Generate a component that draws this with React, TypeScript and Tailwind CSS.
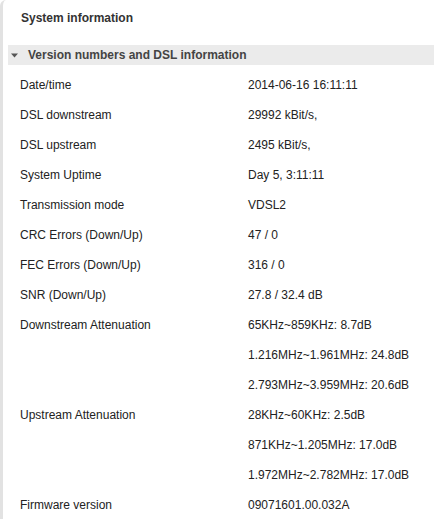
import React from 'react';

interface InfoRow {
  label: string;
  value: string;
}

const ROWS: InfoRow[] = [
  { label: 'Date/time', value: '2014-06-16 16:11:11' },
  { label: 'DSL downstream', value: '29992 kBit/s,' },
  { label: 'DSL upstream', value: '2495 kBit/s,' },
  { label: 'System Uptime', value: 'Day 5, 3:11:11' },
  { label: 'Transmission mode', value: 'VDSL2' },
  { label: 'CRC Errors (Down/Up)', value: '47 / 0' },
  { label: 'FEC Errors (Down/Up)', value: '316 / 0' },
  { label: 'SNR (Down/Up)', value: '27.8 / 32.4 dB' },
  { label: 'Downstream Attenuation', value: '65KHz~859KHz: 8.7dB' },
  { label: '', value: '1.216MHz~1.961MHz: 24.8dB' },
  { label: '', value: '2.793MHz~3.959MHz: 20.6dB' },
  { label: 'Upstream Attenuation', value: '28KHz~60KHz: 2.5dB' },
  { label: '', value: '871KHz~1.205MHz: 17.0dB' },
  { label: '', value: '1.972MHz~2.782MHz: 17.0dB' },
  { label: 'Firmware version', value: '09071601.00.032A' },
];

export default function App() {
  return (
    <div className="w-[434px] h-[519px] overflow-hidden bg-white font-['Liberation_Sans',Arial,sans-serif] text-[12px] text-[#222]">
      <div className="h-full border-l-[3px] border-[#e2e2e2] rounded-tl-[6px] pl-[5px]">
        {/* Panel title */}
        <div className="h-[36px] flex items-center pl-[13px] font-bold text-[#333]">
          System information
        </div>

        {/* Collapsible section header */}
        <div className="mt-[9px] h-[20px] bg-[#ebebeb] flex items-center pl-[3px] font-bold text-[#444]">
          <svg width="7" height="5" viewBox="0 0 7 5" className="mr-[10px] mt-[1px]">
            <path d="M0 0.5 L7 0.5 L3.5 4.5 Z" fill="#555" />
          </svg>
          Version numbers and DSL information
        </div>

        {/* Info table */}
        <div className="mt-[5px] pl-[12px]">
          {ROWS.map((row, i) => (
            <div key={i} className="grid grid-cols-[228px_1fr] h-[30px] items-center">
              <span>{row.label}</span>
              <span>{row.value}</span>
            </div>
          ))}
        </div>
      </div>
    </div>
  );
}
